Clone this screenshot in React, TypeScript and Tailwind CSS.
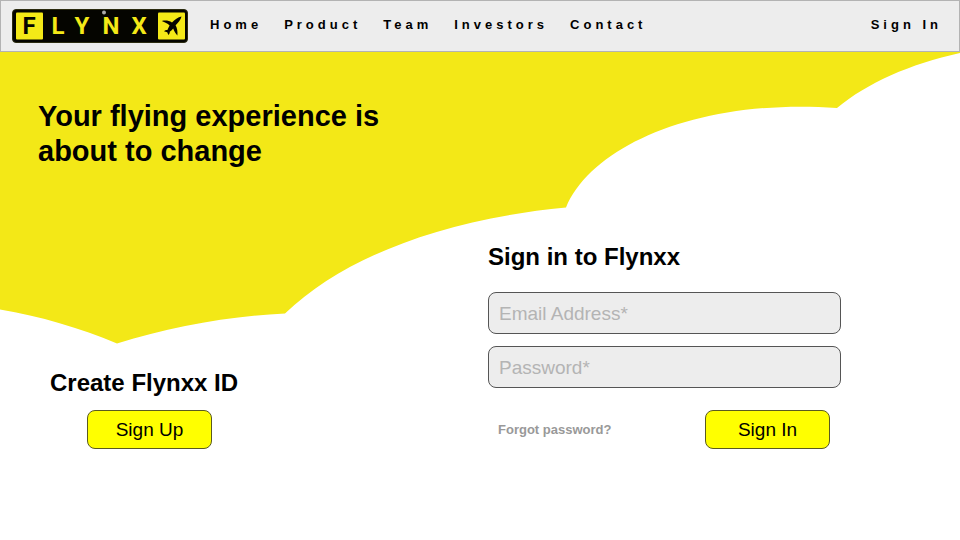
import React from "react";

const navLinks = ["Home", "Product", "Team", "Investors", "Contact"];

const navLink = "text-[13px] leading-4 font-bold tracking-[4px] text-black";
const field =
  "h-[42px] w-full rounded-lg border border-[#555] bg-[#ededed] px-[10px] pt-[2px] text-[19px] text-black placeholder:text-[#b4b4b4]";
const action =
  "h-[39px] w-[125px] rounded-lg border border-[#5a5a20] bg-[#ffff00] pt-[2px] text-[19px] text-black";
const title = "text-[24px] leading-7 font-bold text-black";

function Logo() {
  return (
    <a href="#" aria-label="Flynx" className="block shrink-0">
      <svg
        width="176"
        height="34"
        viewBox="0 0 176 34"
        fontFamily="Roboto, 'Open Sans', sans-serif"
        fontWeight="700"
        fontSize="24"
        textAnchor="middle"
      >
        <rect x="0.5" y="0.5" width="175" height="33" rx="3.5" fill="#050500" stroke="#2c2c10" />
        <rect x="4" y="3.5" width="27" height="27" rx="1" fill="#f4e917" />
        <rect x="146" y="3.5" width="27" height="27" rx="1" fill="#f4e917" />
        <text x="17" y="25" fill="#050500">F</text>
        <g fill="#f4e917">
          <text x="46" y="25">L</text>
          <text x="70" y="25">Y</text>
          <text x="99" y="25">N</text>
          <text x="127" y="25">X</text>
        </g>
        <circle cx="92" cy="3.5" r="2" fill="#aaa" />
        <path
          fill="#050500"
          d="M169.500 7.500 C166 8.300 162.500 10.600 160 13.500 C156.800 11.600 153.500 11.200 149.800 12 C152.800 13.200 155.600 14.600 157.600 16.400 C156.600 18 155.900 19.600 155.400 21 C154 21 152.800 21.400 152 22.200 L155.200 23.200 L156.400 26 C157.400 25.200 157.800 24 157.800 22.800 C159.200 21.800 160.200 20.800 161.200 19.600 C162 22 163.300 24.400 165.400 26.600 C165.800 22.800 165.200 19.300 163.600 16.300 C166.200 13.700 168.600 10.800 169.500 7.500 Z"
        />
      </svg>
    </a>
  );
}

export default function App() {
  return (
    <div className="min-h-screen bg-white font-['Liberation_Sans',Arial,sans-serif]">
      <header className="flex h-[52px] items-center border border-[#b3b3b3] bg-[#ededed] pr-[17px] pl-[11px]">
        <Logo />
        <nav className="ml-[22px] flex flex-1 items-center gap-[22px] pb-[2px]">
          {navLinks.map((label) => (
            <a key={label} href="#" className={navLink}>
              {label}
            </a>
          ))}
          <a href="#sign-in" className={`${navLink} ml-auto`}>
            Sign In
          </a>
        </nav>
      </header>

      <main className="relative">
        <svg
          className="absolute inset-x-0 top-0 w-full"
          viewBox="0 0 960 292"
          aria-hidden="true"
        >
          <path
            fill="#f3e817"
            d="M0 0 H960 V1 C910 12 867 31 837 56 C700 46 592 93 566 155.500 C445 167 345 204 285 261.500 C228 264 170 275 117 291.500 C80 276 40 264 0 257.500 Z"
          />
        </svg>

        <div className="relative grid grid-cols-[minmax(0,450px)_minmax(0,353px)] gap-x-[38px] pt-[47px]">
          <h1 className="col-span-2 pl-[38px] text-[29px] leading-[35px] font-bold text-black">
            Your flying experience is
            <br />
            about to change
          </h1>

          <section className="self-end pl-[50px]">
            <h2 className={title}>Create Flynxx ID</h2>
            <button type="button" className={`${action} mt-[13px] ml-[37px] block`}>
              Sign Up
            </button>
          </section>

          <form id="sign-in" className="mt-[74px]" onSubmit={(e) => e.preventDefault()}>
            <h2 className={title}>Sign in to Flynxx</h2>
            <div className="mt-[21px] flex flex-col gap-3">
              <input type="email" aria-label="Email Address" placeholder="Email Address*" className={field} />
              <input type="password" aria-label="Password" placeholder="Password*" className={field} />
            </div>
            <div className="mt-[22px] flex items-center justify-between pr-[11px] pl-[10px]">
              <a href="#" className="text-[13px] leading-4 font-bold text-[#999]">
                Forgot password?
              </a>
              <button type="submit" className={action}>
                Sign In
              </button>
            </div>
          </form>
        </div>
      </main>
    </div>
  );
}
